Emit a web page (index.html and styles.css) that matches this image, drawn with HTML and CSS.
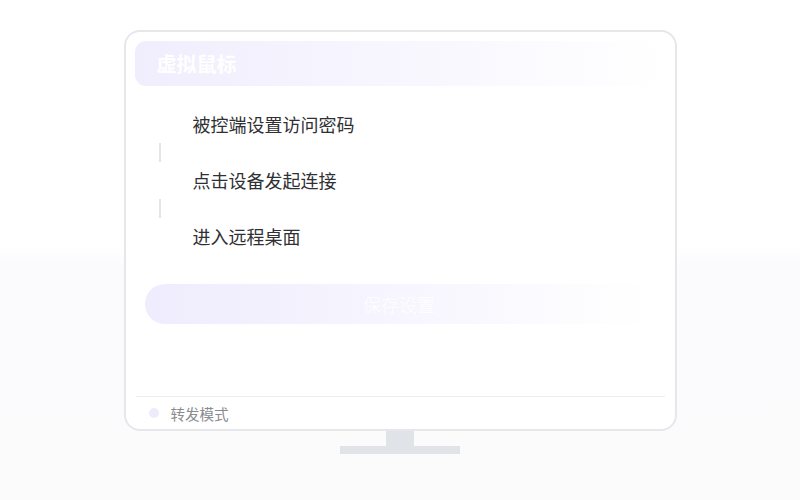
FILE: index.html
```html
<!DOCTYPE html>
<html lang="zh-CN">
<head>
<meta charset="utf-8">
<title>虚拟鼠标</title>
<link rel="stylesheet" href="styles.css">
</head>
<body>
<div class="scene">
  <div class="monitor">
    <div class="header">虚拟鼠标</div>
    <div class="steps">
      <div class="step">被控端设置访问密码</div>
      <div class="connector"></div>
      <div class="step">点击设备发起连接</div>
      <div class="connector"></div>
      <div class="step">进入远程桌面</div>
    </div>
    <div class="save">保存设置</div>
    <div class="footer">
      <span class="dot"></span>
      <span class="mode">转发模式</span>
    </div>
  </div>
  <div class="neck"></div>
  <div class="base"></div>
</div>
</body>
</html>
```

FILE: styles.css
```css
* { box-sizing: border-box; }
html, body {
  margin: 0;
  padding: 0;
  font-family: "Noto Sans CJK SC", "Noto Sans", sans-serif;
}
body {
  background: linear-gradient(180deg, #ffffff 0, #ffffff 245px, #fbfbfd 265px, #fbfbfc 100%);
}
.scene {
  width: 800px;
  height: 500px;
  padding-top: 30px;
  display: flex;
  flex-direction: column;
  align-items: center;
}
.monitor {
  width: 553px;
  height: 401px;
  border: 2px solid #e5e7eb;
  border-radius: 16px;
  background: #ffffff;
  padding: 9px 10px 0 9px;
  display: flex;
  flex-direction: column;
}
.header {
  height: 45px;
  border-radius: 11px;
  background: linear-gradient(90deg, #f0eefd 0%, #f7f5fe 45%, rgba(255,255,255,0) 100%);
  color: #ffffff;
  font-size: 20px;
  font-weight: 700;
  line-height: 45px;
  padding-left: 22px;
}
.steps {
  margin-top: 20px;
  display: flex;
  flex-direction: column;
}
.step {
  height: 37px;
  line-height: 37px;
  padding-left: 58px;
  font-size: 18px;
  color: #2f3033;
}
.connector {
  width: 2px;
  height: 19px;
  margin-left: 24px;
  background: #e3e5ea;
}
.save {
  margin: 29px 11px 0 10px;
  height: 40px;
  border-radius: 20px;
  background: linear-gradient(90deg, #efecfd 0%, #f7f5fe 50%, rgba(255,255,255,0) 100%);
  color: #ffffff;
  font-size: 18px;
  font-weight: 300;
  line-height: 40px;
  text-align: center;
}
.footer {
  margin-top: auto;
  margin-left: 1px;
  height: 33px;
  border-top: 1px solid #eceef1;
  display: flex;
  align-items: center;
  padding-left: 13px;
}
.dot {
  width: 10px;
  height: 10px;
  border-radius: 50%;
  background: #eeebfd;
}
.mode {
  margin-left: 12px;
  font-size: 14.5px;
  color: #8a8c90;
}
.neck {
  width: 28px;
  height: 15px;
  background: #e0e3e8;
}
.base {
  width: 120px;
  height: 8px;
  background: #e0e3e8;
}
```
